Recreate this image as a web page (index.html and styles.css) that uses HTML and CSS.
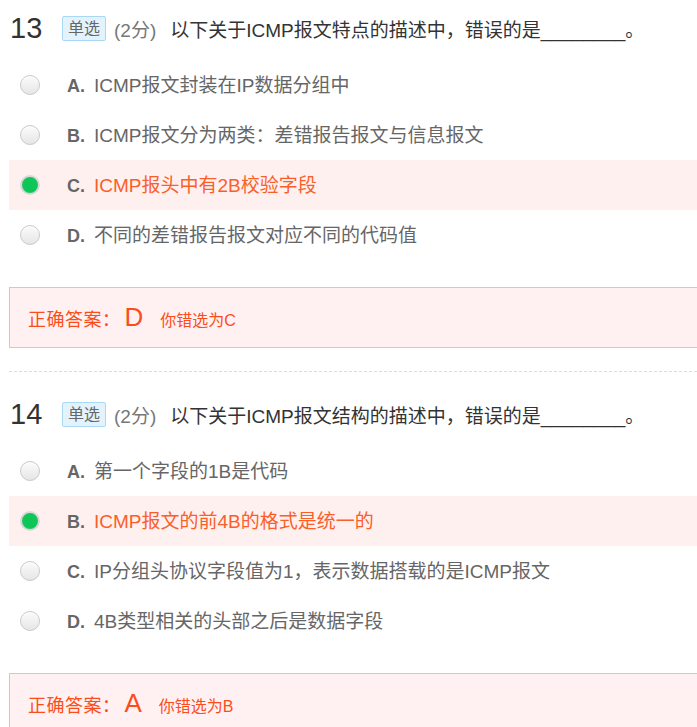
FILE: index.html
```html
<!DOCTYPE html>
<html lang="zh-CN">
<head>
<meta charset="utf-8">
<link rel="stylesheet" href="styles.css">
</head>
<body>
<div class="exam">
  <section class="question">
    <div class="q-head">
      <span class="q-num">13</span>
      <span class="tag">单选</span>
      <span class="score">(2分)</span>
      <span class="q-text">以下关于ICMP报文特点的描述中，错误的是________。</span>
    </div>
    <ul class="options">
      <li class="opt"><span class="radio"></span><span class="line"><span class="key">A.</span><span class="txt">ICMP报文封装在IP数据分组中</span></span></li>
      <li class="opt"><span class="radio"></span><span class="line"><span class="key">B.</span><span class="txt">ICMP报文分为两类：差错报告报文与信息报文</span></span></li>
      <li class="opt sel"><span class="radio on"></span><span class="line"><span class="key">C.</span><span class="txt">ICMP报头中有2B校验字段</span></span></li>
      <li class="opt"><span class="radio"></span><span class="line"><span class="key">D.</span><span class="txt">不同的差错报告报文对应不同的代码值</span></span></li>
    </ul>
    <div class="answer"><span class="a-label">正确答案：</span><span class="a-key">D</span><span class="a-wrong">你错选为C</span></div>
  </section>
  <section class="question next">
    <div class="q-head">
      <span class="q-num">14</span>
      <span class="tag">单选</span>
      <span class="score">(2分)</span>
      <span class="q-text">以下关于ICMP报文结构的描述中，错误的是________。</span>
    </div>
    <ul class="options">
      <li class="opt"><span class="radio"></span><span class="line"><span class="key">A.</span><span class="txt">第一个字段的1B是代码</span></span></li>
      <li class="opt sel"><span class="radio on"></span><span class="line"><span class="key">B.</span><span class="txt">ICMP报文的前4B的格式是统一的</span></span></li>
      <li class="opt"><span class="radio"></span><span class="line"><span class="key">C.</span><span class="txt">IP分组头协议字段值为1，表示数据搭载的是ICMP报文</span></span></li>
      <li class="opt"><span class="radio"></span><span class="line"><span class="key">D.</span><span class="txt">4B类型相关的头部之后是数据字段</span></span></li>
    </ul>
    <div class="answer"><span class="a-label">正确答案：</span><span class="a-key">A</span><span class="a-wrong">你错选为B</span></div>
  </section>
</div>
</body>
</html>
```
FILE: styles.css
```css
html, body {
  margin: 0;
  padding: 0;
  background: #fff;
  overflow: hidden;
}
body {
  font-family: "Liberation Sans", "Noto Sans CJK SC", sans-serif;
  color: #333;
}
.exam {
  padding-left: 9px;
}
.question {
  padding-bottom: 23px;
  border-bottom: 1px dashed #dcdcdc;
}
.question.next {
  padding-top: 14px;
  border-bottom: none;
}
.q-head {
  display: flex;
  align-items: center;
  height: 57px;
  margin-bottom: 3px;
}
.q-num {
  font-size: 29px;
  color: #333;
  width: 53px;
  padding-left: 1px;
  box-sizing: border-box;
}
.tag {
  font-size: 16px;
  color: #666;
  background: #e3f3fd;
  border: 1px solid #aad8f4;
  border-radius: 2px;
  padding: 0 5px;
  height: 23px;
  line-height: 23px;
}
.score {
  font-size: 19px;
  color: #777;
  margin-left: 8px;
}
.q-text {
  font-size: 19px;
  color: #333;
  margin-left: 14px;
}
.options {
  list-style: none;
  margin: 0;
  padding: 0;
}
.opt {
  display: flex;
  align-items: center;
  height: 50px;
  padding-left: 11px;
  font-size: 19px;
  color: #666;
}
.opt.sel {
  background: #fff0f0;
}
.opt.sel .txt {
  color: #fa5f2a;
}
.line {
  display: flex;
  align-items: baseline;
  padding-bottom: 3px;
}
.radio {
  width: 18px;
  height: 18px;
  border-radius: 50%;
  border: 1px solid #c9c9c9;
  background: linear-gradient(#fbfbfb, #e6e6e6);
  box-shadow: inset 0 1px 1px rgba(255,255,255,0.8);
  margin-right: 27px;
  flex: none;
}
.radio.on {
  width: 16px;
  height: 16px;
  border: 2px solid #d8d8d8;
  background: #0cc658;
  box-shadow: inset 0 0 0 1px #25c262;
}
.key {
  font-weight: bold;
  font-size: 18px;
  color: #666;
  width: 27px;
  flex: none;
}
.answer {
  margin-top: 27px;
  height: 59px;
  border: 1px solid #f6b9b6;
  border-right: none;
  background: #fff1f1;
  display: flex;
  align-items: baseline;
  padding-left: 18px;
  line-height: 59px;
  color: #fb4d1c;
}
.a-label {
  font-size: 18px;
  letter-spacing: 0.5px;
}
.a-key {
  font-size: 26px;
  margin-left: 4px;
}
.a-wrong {
  font-size: 16px;
  margin-left: 17px;
}
```
